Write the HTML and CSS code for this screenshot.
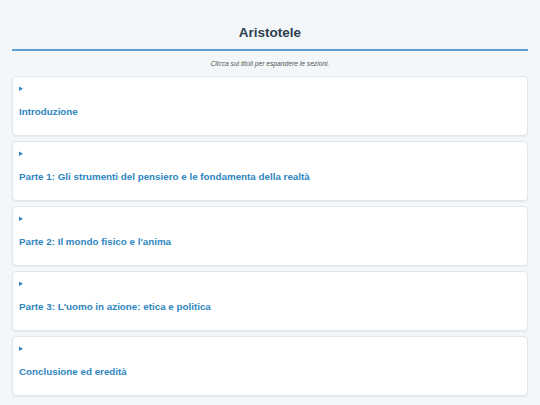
FILE: index.html
```html
<!DOCTYPE html>
<html lang="it">
<head>
  <meta charset="UTF-8">
  <meta name="viewport" content="width=device-width, initial-scale=1.0">
  <title>Aristotele</title>
  <link rel="stylesheet" href="styles.css">
</head>
<body>
  <div class="page">
    <header>
      <h1>Aristotele</h1>
    </header>
    <p class="hint">Clicca sui titoli per espandere le sezioni.</p>

    <details class="section">
      <summary><h2>Introduzione</h2></summary>
      <div class="section-body"><p>Vita e contesto storico del filosofo di Stagira.</p></div>
    </details>
    <details class="section">
      <summary><h2>Parte 1: Gli strumenti del pensiero e le fondamenta della realtà</h2></summary>
      <div class="section-body"><p>Logica, categorie e metafisica.</p></div>
    </details>
    <details class="section">
      <summary><h2>Parte 2: Il mondo fisico e l'anima</h2></summary>
      <div class="section-body"><p>Fisica, biologia e psicologia.</p></div>
    </details>
    <details class="section">
      <summary><h2>Parte 3: L'uomo in azione: etica e politica</h2></summary>
      <div class="section-body"><p>Etica Nicomachea e Politica.</p></div>
    </details>
    <details class="section">
      <summary><h2>Conclusione ed eredità</h2></summary>
      <div class="section-body"><p>L'influenza di Aristotele nella storia del pensiero.</p></div>
    </details>
  </div>
</body>
</html>
```

FILE: styles.css
```css
* {
  box-sizing: border-box;
}
body {
  margin: 0;
  background-color: #f4f7f9;
  font-family: "Liberation Sans", Arial, sans-serif;
  color: #333;
}
.page {
  padding: 0 12px;
}
header {
  padding-top: 24px;
  border-bottom: 2px solid #5b9fd6;
}
header h1 {
  margin: 0;
  padding-bottom: 7px;
  text-align: center;
  font-size: 13.5px;
  line-height: 18px;
  color: #2c3e50;
}
.hint {
  margin: 8px 0 8px;
  text-align: center;
  font-style: italic;
  font-size: 6.7px;
  line-height: 9px;
  color: #555;
}
.section {
  background-color: #fff;
  border: 1px solid #e1e6ea;
  border-radius: 4px;
  box-shadow: 0 1px 2px rgba(0, 0, 0, 0.06);
  margin-bottom: 5px;
}
.section summary {
  padding: 8px 6px 6px;
  font-size: 7px;
  line-height: 8px;
  color: #2e86c1;
  cursor: pointer;
}
.section summary h2 {
  margin: 13px 0 11px;
  font-size: 9.8px;
  line-height: 12px;
  color: #2e86c1;
}
.section-body {
  padding: 0 6px 8px;
  font-size: 8px;
}
```
